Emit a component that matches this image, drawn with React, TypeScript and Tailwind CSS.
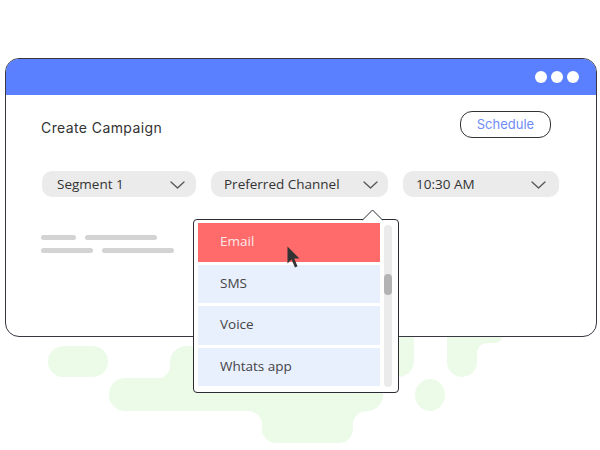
import React from "react";

const items = ["Email", "SMS", "Voice", "Whtats app"];

const Chevron = () => (
  <svg width="15" height="8" viewBox="0 0 15 8" fill="none">
    <path d="M1 1 L7.5 7 L14 1" stroke="#555" strokeWidth="1.3" strokeLinecap="round" strokeLinejoin="round" />
  </svg>
);

const Blobs = () => (
  <svg className="absolute inset-0" width="600" height="450" viewBox="0 0 600 450">
    <g fill="#ecfbe8">
      <rect x="48" y="346" width="60" height="31" rx="15.5" />
      <rect x="109" y="378" width="274" height="33" rx="16" />
      <rect x="170" y="346" width="120" height="44" rx="16" />
      <path d="M170 366 A12 12 0 0 1 158 378 L170 378 Z" />
      <rect x="262" y="395" width="91" height="48" rx="14" />
      <path d="M262 425 A14 14 0 0 0 248 411 L262 411 Z" />
      <path d="M353 425 A14 14 0 0 1 367 411 L353 411 Z" />
      <rect x="340" y="320" width="74" height="57" rx="16" />
      <rect x="447" y="320" width="30" height="57" rx="15" />
      <rect x="447" y="320" width="56" height="23" rx="8" />
      <path d="M477 353 A10 10 0 0 1 487 343 L477 343 Z" />
      <ellipse cx="430" cy="395" rx="15" ry="16" />
    </g>
  </svg>
);

export default function App() {
  return (
    <div className="relative w-[600px] h-[450px] bg-white overflow-hidden" style={{ fontFamily: "'Open Sans', sans-serif" }}>
      <Blobs />
      <div className="relative ml-[5px] mt-[58px] w-[592px] h-[279px] rounded-[14px] border border-[#3a3743] bg-white">
        <div className="h-[36px] rounded-t-[13px] bg-[#5b80ff] flex items-center justify-end gap-[4px] pr-[17px]">
          <span className="w-[12px] h-[12px] rounded-full bg-white" />
          <span className="w-[12px] h-[12px] rounded-full bg-white" />
          <span className="w-[12px] h-[12px] rounded-full bg-white" />
        </div>
        <div className="flex items-center justify-between pl-[35px] pr-[45px] pt-[16px]">
          <div className="pt-[6px] text-[14px] text-[#333] tracking-[0.4px] font-[Inter,sans-serif]">Create Campaign</div>
          <button className="w-[91px] h-[27px] rounded-[12px] border border-[#333] text-[13px] text-[#6f8cf7] font-[Inter,sans-serif]">
            Schedule
          </button>
        </div>
        <div className="flex gap-[15px] pl-[36px] pt-[33px]">
          <div className="w-[154px] h-[26px] rounded-[10px] bg-[#ebebeb] flex items-center justify-between pl-[15px] pr-[11px] pt-[1px] text-[13.5px] text-[#333]">
            <span>Segment 1</span>
            <Chevron />
          </div>
          <div className="w-[177px] h-[26px] rounded-[10px] bg-[#ebebeb] flex items-center justify-between pl-[13px] pr-[10px] pt-[1px] text-[13.5px] text-[#333]">
            <span>Preferred Channel</span>
            <Chevron />
          </div>
          <div className="w-[156px] h-[26px] rounded-[10px] bg-[#ebebeb] flex items-center justify-between pl-[13px] pr-[13px] pt-[1px] text-[13.5px] text-[#333]">
            <span>10:30 AM</span>
            <Chevron />
          </div>
        </div>
        <div className="flex flex-col gap-[8px] pl-[35px] pt-[38px]">
          <div className="flex gap-[9px]">
            <span className="w-[35px] h-[5px] rounded-full bg-[#d3d3d3]" />
            <span className="w-[72px] h-[5px] rounded-full bg-[#d3d3d3]" />
          </div>
          <div className="flex gap-[9px]">
            <span className="w-[52px] h-[5px] rounded-full bg-[#d3d3d3]" />
            <span className="w-[72px] h-[5px] rounded-full bg-[#d3d3d3]" />
          </div>
        </div>
      </div>

      {/* dropdown menu */}
      <div className="absolute left-[193px] top-[219px] w-[206px] h-[174px] rounded-[4px] border border-[#2d2a33] bg-white flex pl-[4px] pr-[5px] pt-[3px] pb-[5px] gap-[4px]">
        <svg className="absolute left-[168px] top-[-11px]" width="21" height="12" viewBox="0 0 21 12">
          <path d="M0 11.5 L10.5 1 L21 11.5 Z" fill="#fff" />
          <path d="M0 11.5 L10.5 1 L21 11.5" fill="none" stroke="#2d2a33" strokeWidth="1" />
        </svg>
        <div className="flex flex-col gap-[3px] w-[182px]">
          {items.map((it, i) => (
            <div
              key={it}
              className={`h-[38.5px] flex items-center pl-[22px] pb-[2px] text-[13.5px] ${
                i === 0 ? "bg-[#ff6b6b] text-[#fde8e8]" : "bg-[#e8effd] text-[#444]"
              }`}
            >
              {it}
            </div>
          ))}
        </div>
        <div className="relative mt-[2px] w-[8px] h-[162px] rounded-full bg-[#ebebeb]">
          <div className="absolute left-0 top-[49px] w-[8px] h-[21px] rounded-full bg-[#b3b3b3]" />
        </div>
      </div>

      {/* cursor */}
      <svg className="absolute left-[287px] top-[246px]" width="14" height="23" viewBox="0 0 14 23">
        <path d="M0.5 0.5 V17.5 L4.5 13.5 L8 21.5 L10.5 20.3 L7.2 12.6 L12.5 12.6 Z" fill="#333" />
      </svg>
    </div>
  );
}
